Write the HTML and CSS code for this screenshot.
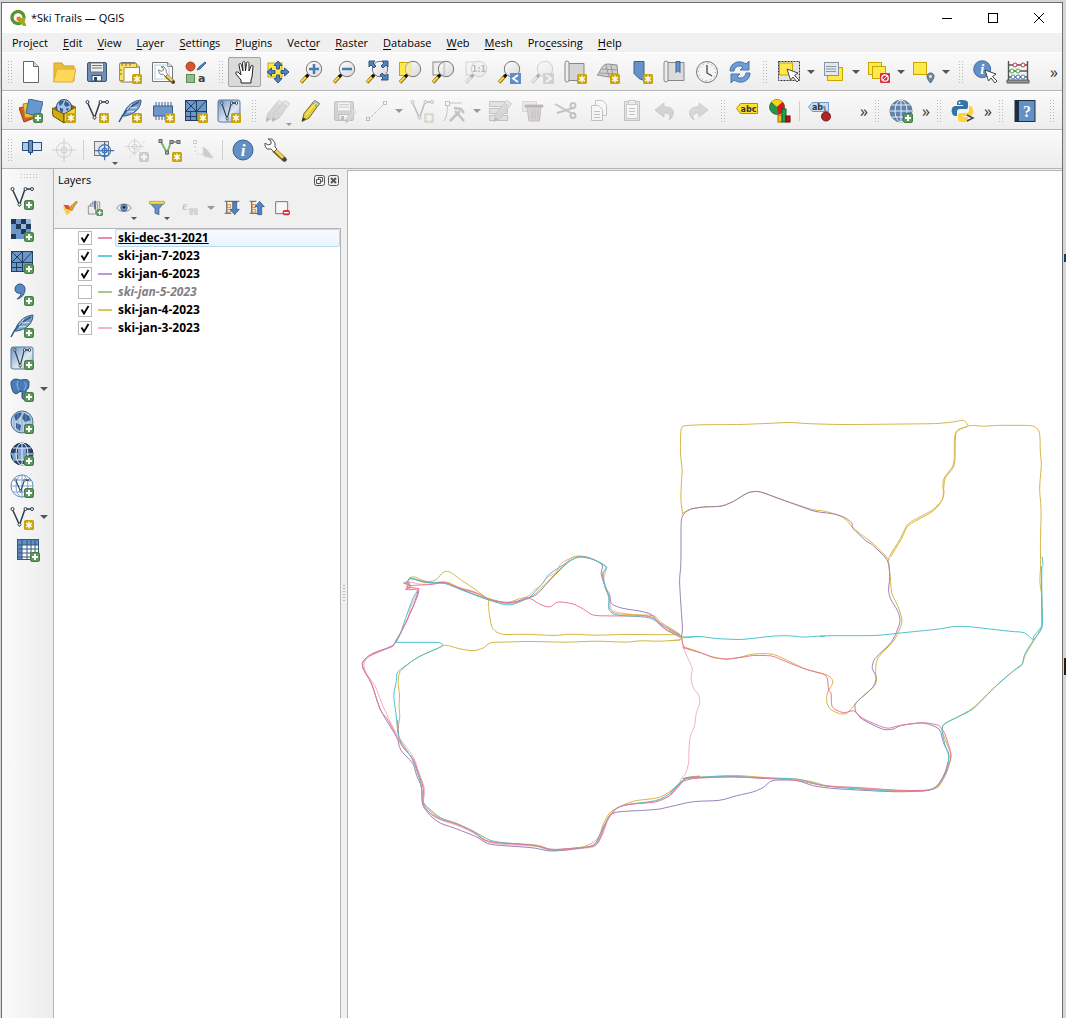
FILE: index.html
```html
<!DOCTYPE html>
<html lang="en">
<head>
<meta charset="utf-8">
<title>*Ski Trails — QGIS</title>
<link rel="stylesheet" href="styles.css">
<script src="tracks.js" defer></script>
</head>
<body>
<svg class="paints" aria-hidden="true">
  <linearGradient id="g-steel" x1="0" y1="0" x2="1" y2="1"><stop offset="0" stop-color="#6f94c0"/><stop offset=".6" stop-color="#dfe8f2"/><stop offset="1" stop-color="#8aa6c8"/></linearGradient>
  <linearGradient id="g-lens" x1="0" y1="0" x2="1" y2="1"><stop offset="0" stop-color="#fff"/><stop offset="1" stop-color="#d4d4d4"/></linearGradient>
</svg>
<svg class="sprite" aria-hidden="true">
  <defs>
    <g id="star"><rect x="14" y="14" width="10" height="10" rx="1.500" fill="#c9a40c"/><path d="M19 15.500v7M16 17.200l6 3.600M22 17.200l-6 3.600" stroke="#fff" stroke-width="1.400"/></g>
    <g id="plus"><rect x="14.500" y="14.500" width="9" height="9" rx="1.500" fill="#5b9a5b" stroke="#457f45"/><path d="M19 16v6M16 19h6" stroke="#fff" stroke-width="2"/></g>
    <g id="lens"><path d="M8.500 15.500L2 22.500" stroke="#8a6d00" stroke-width="3.400"/><path d="M7 17l-5 5" stroke="#fcd24c" stroke-width="2"/><path d="M9.500 14.500l-2.500 2.500" stroke="#111" stroke-width="3"/><circle cx="15" cy="9" r="7.700" fill="url(#g-lens)" fill-opacity=".85" stroke="#777"/></g>
    <g id="vee"><path d="M2.500 3.500L9.500 19 15 3h7" fill="none" stroke="#2b3c4e" stroke-width="1.500"/><g fill="#fff" stroke="#2b3c4e"><circle cx="2.500" cy="3" r="1.500"/><circle cx="9.500" cy="18.500" r="1.500"/><circle cx="15.500" cy="3" r="1.500"/><circle cx="22" cy="3" r="1.500"/></g></g>
    <g id="feather"><path d="M5 17C7 9 13 2 23 1c0 7-5 14-16 16z" fill="#7ba3cf" stroke="#35587f"/><path d="M1 23C5 14 12 7 21 3" stroke="#35587f" stroke-width="1.500" fill="none"/><path d="M9 13l7-.5M12 9l7-.5M9 11l5-6" stroke="#dce8f4" fill="none"/></g>
    <g id="mesh"><rect x="1.500" y="1.500" width="21" height="20" fill="#6d97cb" stroke="#213f63"/><path d="M1.500 12.500h21M12.500 1.500v11M1.500 1.500l11 11M12.500 1.500l-11 11M12.500 12.500l10-11M6.500 12.500v9M12.500 12.500v9M1.500 17.500h11" stroke="#213f63" fill="none"/></g>
    <g id="arrow"><path d="M0 0l3.500 11 2.500-3 4 5 2-2-4.500-4.500L11 4z" fill="#fff" stroke="#444"/></g>
    <g id="grid-lines"><path d="M12 1v22M1 12h22M3 6h18M3 18h18" fill="none"/><ellipse cx="12" cy="12" rx="6" ry="11" fill="none"/></g>
    <g id="target"><circle cx="12" cy="12" r="7.500" fill="none"/><path d="M12 0v24M0 12h24"/><circle cx="12" cy="12" r="3" fill="none"/></g>
    <g id="wrench"><path d="M10 12l11 10" stroke="#7c6314" stroke-width="5"/><path d="M10.500 11.500L20 20.500" stroke="#f1cf63" stroke-width="3"/><path d="M19 20l3 3" stroke="#444" stroke-width="3.500"/><path d="M4 1l4 0 3 4 0 4 2 2-3 3-3-3-4 0-2-3 0-3 3 2 3-1 0-3z" fill="#fff" stroke="#555"/></g>
    <g id="pencil"><path d="M3 22.500l2-8L15.500 1.500l5 3L10 19z" fill="#e2cf3a" stroke="#77671b"/><path d="M15.500 1.500l5 3-2 3-5-3.500z" fill="#c9c9c9" stroke="#888"/><path d="M7 16L16 5" stroke="#fff59a"/><path d="M3 22.500l1-4 3 1.500z" fill="#333"/></g>
    <g id="pencil-red"><path d="M3 22.500l2-8L15.500 1.500l5 3L10 19z" fill="#b98f8f" stroke="#8b5f5f"/><path d="M15.500 1.500l5 3-2 3-5-3.500z" fill="#c9c9c9" stroke="#888"/><path d="M3 22.500l1-4 3 1.500z" fill="#333"/></g>
    <g id="disk"><rect x="2.500" y="2.500" width="19" height="19" rx="1.500" fill="#6b8fbb" stroke="#3d566f"/><path d="M5.500 3h13v9h-13z" fill="#eee" stroke="#777"/><path d="M7 5.500h10M7 8h10" stroke="#777"/><path d="M7 15.500h9.500V21H7z" fill="#f6f6f6" stroke="#344e68"/><path d="M9 17h3v4H9z" fill="#34495e"/></g>
    <g id="info"><circle cx="12" cy="12" r="10" fill="#6290c5" stroke="#365f93"/><text x="12" y="18" text-anchor="middle" class="glyph-i">i</text></g>
    <g id="page"><path d="M3 2.500h14l4.500 4.500v15H3z" fill="#fff" stroke="#777"/><path d="M17 2.500V7h4.500" fill="#ddd" stroke="#777"/></g>
    <g id="globe-land" fill="#39608f"><path d="M4 6c3-4 6-4 8-3l-2 4-4 4zM14 3l5 3 2 4-6 2-3-4zM6 13l5 2-1 6-4-3zM15 14l5 0-3 5z"/></g>
  </defs>
  <symbol id="i-qgis" viewBox="0 0 24 24"><path d="M18 18A9 9 0 1 1 21 12" fill="none" stroke="#589632" stroke-width="5"/><path d="M21 12a9 9 0 0 1-2 5" fill="none" stroke="#93b023" stroke-width="5"/><path d="M12 12h6l6 9v3h-4l-8-8z" fill="#93b023"/><path d="M10 10h6l0 6-6 0z" fill="#ee7913"/></symbol>
  <symbol id="i-new" viewBox="0 0 24 24"><path d="M4.500 1.500h10l5 5v16h-15z" fill="#fff" stroke="#666"/><path d="M14.500 1.500v5h5" fill="#ddd" stroke="#666"/></symbol>
  <symbol id="i-open" viewBox="0 0 24 24"><path d="M2 3h8l2 3h10v15H2z" fill="#ecbc3c" stroke="#d09f22"/><path d="M5 9h19l-3 13H1.500z" fill="#fdd757" stroke="#dcae30"/></symbol>
  <symbol id="i-save" viewBox="0 0 24 24"><use href="#disk"/></symbol>
  <symbol id="i-layout" viewBox="0 0 24 24"><use href="#page"/><path d="M1.500 3.500h17v4H6v13H1.500z" fill="#f9df72" stroke="#b3911c"/><path d="M4 4v2M8 4v2M12 4v2M2 10h2M2 14h2" stroke="#8a6d00"/><use href="#star"/></symbol>
  <symbol id="i-layouts" viewBox="0 0 24 24"><path d="M1.500 2.500h15l5 4v15h-20z" fill="#fff" stroke="#777"/><path d="M16.500 2.500v4h5" fill="#ddd" stroke="#777"/><rect x="4" y="5" width="14" height="14" fill="none" stroke="#b5cbea"/><g transform="translate(7 6) scale(.75)"><use href="#wrench"/></g></symbol>
  <symbol id="i-style" viewBox="0 0 24 24"><circle cx="6.500" cy="6.500" r="4.500" fill="#d2562e" stroke="#a83f1d"/><path d="M13 10l3-1 6-6-1-1-6 5z" fill="#5b8cc6" stroke="#345f95"/><rect x="2.500" y="14.500" width="8" height="8" fill="#93bd8d" stroke="#5c8a56"/><text x="14" y="22" class="glyph-a">a</text></symbol>
  <symbol id="i-pan" viewBox="0 0 24 24"><path d="M8 23v-3L3 14c-1-2 1-3 3-1l2 2L6 5c0-2 2-2 2.500 0L10 11 9.500 3c0-2 2.500-2 2.500 0l.5 8 1-7.500c0-2 2.500-2 2.500 0L16 11l2-5c1-1.500 2.500-.5 2 1l-1 10-1 3v3z" fill="#fff" stroke="#222"/></symbol>
  <symbol id="i-pansel" viewBox="0 0 24 24"><rect x="2" y="3" width="14" height="14" fill="#ffe84c" stroke="#c7a600"/><path d="M12 1l4 4.500h-2.500V9h-3V5.500H8zM12 23l-4-4.500h2.500V15h3v3.500H16zM1 12l4.500-4v2.500H9v3H5.500V16zM23 12l-4.500 4v-2.500H15v-3h3.500V8z" fill="#4f83c1" stroke="#2d5486"/></symbol>
  <symbol id="i-zin" viewBox="0 0 24 24"><use href="#lens"/><path d="M15 4v10M10 9h10" stroke="#4a7ab4" stroke-width="2.500"/></symbol>
  <symbol id="i-zout" viewBox="0 0 24 24"><use href="#lens"/><path d="M10 9h10" stroke="#4a7ab4" stroke-width="2.500"/></symbol>
  <symbol id="i-zfull" viewBox="0 0 24 24"><use href="#lens"/><path d="M4 1h6L8 3l3 3-2 2-3-3-2 2zM23 1v6l-2-2-3 3-2-2 3-3-2-2zM23 20h-7l2-2-3-3 2-2 3 3 3-2z" fill="#4f83c1" stroke="#2d5486"/></symbol>
  <symbol id="i-zsel" viewBox="0 0 24 24"><rect x="1.500" y="2.500" width="12" height="13" fill="#ffe84c" stroke="#c7a600"/><use href="#lens"/><path d="M14 2v14a7 7 0 0 1 0-14z" fill="#efe79a" opacity=".7"/></symbol>
  <symbol id="i-zlay" viewBox="0 0 24 24"><rect x="2" y="2" width="12" height="13" fill="#eee" stroke="#888"/><use href="#lens"/><path d="M13 2v13" stroke="#bbb"/></symbol>
  <symbol id="i-znat" viewBox="0 0 24 24"><rect x="2" y="2" width="12" height="13" fill="#eee" stroke="#888"/><use href="#lens"/><text x="15" y="12" text-anchor="middle" class="glyph-abc">1:1</text></symbol>
  <symbol id="i-zlast" viewBox="0 0 24 24"><use href="#lens"/><rect x="13" y="13" width="11" height="11" fill="#5f8fc7"/><path d="M21 15l-5 3.500 5 3.500" fill="none" stroke="#fff" stroke-width="1.800"/></symbol>
  <symbol id="i-znext" viewBox="0 0 24 24"><use href="#lens"/><rect x="13" y="13" width="11" height="11" fill="#888"/><path d="M16 15l5 3.500-5 3.500" fill="none" stroke="#fff" stroke-width="1.800"/></symbol>
  <symbol id="i-map" viewBox="0 0 24 24"><path d="M5 3.500h16v17H5z" fill="#d5d5d5" stroke="#888"/><path d="M2 3q0-2 2-2t2 2v17q0 2-2 2t-2-2z" fill="#eee" stroke="#888"/><use href="#star"/></symbol>
  <symbol id="i-map3" viewBox="0 0 24 24"><path d="M1 15C5 12 5 4 12 4l9 1 1 11-9 1z" fill="#cfcfcf" stroke="#8d8d8d"/><path d="M6 9l15 1M10 5l3 12M15 5l2 11M3 13l19 1" stroke="#9a9a9a" fill="none"/><use href="#star"/></symbol>
  <symbol id="i-bm" viewBox="0 0 24 24"><path d="M5 1.500h10v19l-5-2-5-5z" fill="#6592c8" stroke="#3a628f"/><use href="#star"/></symbol>
  <symbol id="i-bms" viewBox="0 0 24 24"><path d="M5 2.500h17v18H5z" fill="#dcdcdc" stroke="#888"/><path d="M2 3q0-2 2-2t2 2v17q0 2-2 2t-2-2z" fill="#eee" stroke="#888"/><path d="M14 1.500h4v11l-2-2-2 2z" fill="#6592c8" stroke="#3a628f"/></symbol>
  <symbol id="i-clock" viewBox="0 0 24 24"><circle cx="12" cy="12" r="10.500" fill="#f4f4f4" stroke="#777"/><circle cx="12" cy="12" r="8.500" fill="none" stroke="#6c93c4" stroke-dasharray="1 3.450"/><path d="M12 5v8l5 3" fill="none" stroke="#444" stroke-width="1.300"/></symbol>
  <symbol id="i-reload" viewBox="0 0 24 24"><path d="M2 11C2 3 11-1 18 4l3-3v9h-9l3-3C11 5 7 6 6 11z" fill="#6f9dd2" stroke="#4875aa"/><path d="M22 13c0 8-9 12-16 7l-3 3v-9h9l-3 3c4 2 8 1 9-4z" fill="#6f9dd2" stroke="#4875aa"/></symbol>
  <symbol id="i-sel" viewBox="0 0 24 24"><rect x="1.500" y="1.500" width="21" height="19" fill="#e4e4e4" stroke="#333" stroke-dasharray="2 1"/><rect x="2.500" y="3" width="13" height="12" fill="#ffe84c" stroke="#c7a600"/><g transform="translate(10 9)"><use href="#arrow"/></g></symbol>
  <symbol id="i-selval" viewBox="0 0 24 24"><rect x="5.500" y="7.500" width="15" height="13" fill="#ffe84c" stroke="#c7a600"/><rect x="2.500" y="2.500" width="14" height="13" fill="#e5e7ea" stroke="#8496a6"/><path d="M4 6.500h10M4 9h10M4 11.500h10" stroke="#8496a6"/></symbol>
  <symbol id="i-desel" viewBox="0 0 24 24"><rect x="1.500" y="2.500" width="13" height="12" fill="#ffe84c" stroke="#c7a600"/><rect x="5.500" y="6.500" width="13" height="12" fill="#ffe84c" stroke="#c7a600"/><rect x="13" y="13" width="10" height="10" rx="1" fill="#dc2f3c"/><circle cx="18" cy="18" r="3.200" fill="none" stroke="#fff" stroke-width="1.300"/><path d="M16 20l4-4" stroke="#fff"/></symbol>
  <symbol id="i-selloc" viewBox="0 0 24 24"><rect x="1.500" y="2.500" width="13" height="12" fill="#ffe84c" stroke="#c7a600"/><path d="M18.500 23c-6-7-3-10 0-10s6 3 0 10z" fill="#6f899f" stroke="#4e687d"/><circle cx="18.500" cy="16.500" r="1.300" fill="#fff"/></symbol>
  <symbol id="i-ident" viewBox="0 0 24 24"><g transform="translate(-1 -1) scale(.85)"><use href="#info"/></g><g transform="translate(12 10)"><use href="#arrow"/></g></symbol>
  <symbol id="i-abacus" viewBox="0 0 24 24"><path d="M2.500 1v21M21.500 1v21M2 5h20M2 11h20M2 17h20" stroke="#555" fill="none" stroke-width="1.400"/><path d="M1 20h22v3H1z" fill="#999" stroke="#555"/><g fill="#fff"><g stroke="#c33"><circle cx="9" cy="5" r="2"/><circle cx="17" cy="5" r="2"/></g><g stroke="#4a4"><circle cx="6" cy="11" r="2"/><circle cx="12" cy="11" r="2"/></g><g stroke="#4878b0"><circle cx="7" cy="17" r="2"/><circle cx="12" cy="17" r="2"/><circle cx="17" cy="17" r="2"/></g></g></symbol>
  <symbol id="i-dsm" viewBox="0 0 24 24"><path d="M0 9l12-3 6 12-13 5z" fill="#d5592c" stroke="#98401d"/><path d="M4 5l13-2 2 14-13 2z" fill="#f0c62c" stroke="#af8b12"/><path d="M10 0l14 3-4 15-13-4z" fill="#6797cf" stroke="#3c6698"/><use href="#plus"/></symbol>
  <symbol id="i-gpkg" viewBox="0 0 24 24"><path d="M1 9l12-7 11 6-12 7z" fill="#806c10"/><circle cx="12" cy="8" r="7.500" fill="#a9c4e5" stroke="#2e4e75"/><g transform="translate(4 0) scale(.66)"><use href="#globe-land"/></g><path d="M0 9l12 6v9L1 17z" fill="#d2ac12" stroke="#66500a"/><path d="M12 15l12-7v9l-12 7z" fill="#f6d926" stroke="#66500a"/><use href="#star"/></symbol>
  <symbol id="i-shp" viewBox="0 0 24 24"><use href="#vee"/><use href="#star"/></symbol>
  <symbol id="i-spl" viewBox="0 0 24 24"><use href="#feather"/><use href="#star"/></symbol>
  <symbol id="i-mem" viewBox="0 0 24 24"><path d="M5 3v18M8 3v18M11 3v18M14 3v18M17 3v18M20 3v18" stroke="#38618f"/><rect x="2.500" y="7" width="19" height="10" fill="#6d97cb" stroke="#38618f"/><use href="#star"/></symbol>
  <symbol id="i-meshnew" viewBox="0 0 24 24"><use href="#mesh"/><use href="#star"/></symbol>
  <symbol id="i-gps" viewBox="0 0 24 24"><rect x="1" y="1" width="22" height="22" rx="2" fill="url(#g-steel)" stroke="#56789f"/><g transform="translate(3 1) scale(.75 1)"><use href="#vee"/></g><use href="#star"/></symbol>
  <symbol id="i-edits" viewBox="0 0 24 24"><g transform="translate(-3 0)"><use href="#pencil-red"/></g><g transform="translate(3 0)"><use href="#pencil-red"/></g></symbol>
  <symbol id="i-edit" viewBox="0 0 24 24"><use href="#pencil"/></symbol>
  <symbol id="i-saveed" viewBox="0 0 24 24"><use href="#disk"/><g transform="translate(12 10) scale(.6)"><use href="#pencil-red"/></g></symbol>
  <symbol id="i-line" viewBox="0 0 24 24"><path d="M3 21L20 4" stroke="#444" stroke-dasharray="3 1.500"/><g fill="#fff" stroke="#444"><rect x="1.500" y="18.500" width="3" height="3"/><rect x="18.500" y="2.500" width="3" height="3"/></g></symbol>
  <symbol id="i-vertex" viewBox="0 0 24 24"><path d="M5 4h14M4 5c1 6 0 12-3 17" fill="none" stroke="#555"/><rect x="2.500" y="2.500" width="4" height="4" fill="#fff" stroke="#444"/><path d="M7 22l10-10M21 22l-9-10M11 9l7 1 3 4" stroke="#555" stroke-width="2.500" fill="none"/></symbol>
  <symbol id="i-modattr" viewBox="0 0 24 24"><path d="M1.500 2.500h18v5h-18zM1.500 9.500h18v5h-18zM1.500 16.500h18v5h-18z" fill="#c9c06a" stroke="#555"/><g transform="translate(3 0)"><use href="#pencil-red"/></g></symbol>
  <symbol id="i-trash" viewBox="0 0 24 24"><path d="M1.500 2.500h14v10h-14z" fill="#d5cc9a" stroke="#999"/><path d="M6 8h14l-1.500 14H8z" fill="#c58080" stroke="#8d3a3a"/><path d="M4 6h18v2H4zM11 10v10M14 10v10M17 10v10" stroke="#8d3a3a"/></symbol>
  <symbol id="i-cut" viewBox="0 0 24 24"><path d="M1 5l16 9M3 14l16-5" stroke="#555" stroke-width="2"/><circle cx="19" cy="6.500" r="2.500" fill="none" stroke="#844" stroke-width="2"/><circle cx="19" cy="16.500" r="2.500" fill="none" stroke="#844" stroke-width="2"/></symbol>
  <symbol id="i-copy" viewBox="0 0 24 24"><path d="M8.500 1.500h7l4 4v11h-11z" fill="#fff" stroke="#555"/><path d="M4.500 6.500h7l4 4v11h-11z" fill="#fff" stroke="#555"/><path d="M7 12.500h6M7 15.500h6M7 18.500h6" stroke="#555"/></symbol>
  <symbol id="i-paste" viewBox="0 0 24 24"><path d="M4.500 2.500h15v19h-15z" fill="#bbb" stroke="#555"/><path d="M6.500 5.500h11v14h-11z" fill="#fff" stroke="#777"/><path d="M8.500 1.500h7v4h-7z" fill="#ddd" stroke="#555"/><path d="M9 9.500h6M9 12.500h6M9 15.500h6" stroke="#555"/></symbol>
  <symbol id="i-undo" viewBox="0 0 24 24"><path d="M2 11l9-7v4c11-1 12 8 5 13 3-6-1-7-5-7v4z" fill="#b08070" stroke="#865"/></symbol>
  <symbol id="i-redo" viewBox="0 0 24 24"><path d="M22 11l-9-7v4C2 7 1 16 8 21c-3-6 1-7 5-7v4z" fill="#8b9f90" stroke="#576"/></symbol>
  <symbol id="i-abc" viewBox="0 0 24 24"><path d="M1.500 9.500l4-5h17v10h-17z" fill="#ffe22c" stroke="#ab8f10"/><text x="13.500" y="12.500" text-anchor="middle" class="glyph-abc">abc</text></symbol>
  <symbol id="i-diag" viewBox="0 0 24 24"><circle cx="9" cy="8" r="7.500" fill="#1d9c48" stroke="#333" stroke-width=".6"/><path d="M9 8L3.500 3a7.500 7.500 0 0 1 11 0z" fill="#fcd016"/><path d="M9 8l5.500-5a7.500 7.500 0 0 1-4 12.500z" fill="#d01c1c"/><rect x="10" y="16" width="4" height="7" fill="#fcb813" stroke="#a36d00"/><rect x="14" y="10" width="4" height="13" fill="#1da44c" stroke="#0d6529"/><rect x="18" y="17" width="4" height="6" fill="#c41414" stroke="#700"/></symbol>
  <symbol id="i-abpin" viewBox="0 0 24 24"><path d="M.5 8l4-4.500h16v9h-16z" fill="#c7dcf4" stroke="#6c98cd"/><text x="9.500" y="11" text-anchor="middle" class="glyph-abc">ab</text><path d="M16 7l2 8" stroke="#888" stroke-width="2"/><circle cx="18" cy="17.500" r="4.500" fill="#ac2727" stroke="#821616"/></symbol>
  <symbol id="i-web" viewBox="0 0 24 24"><circle cx="12" cy="12" r="11" fill="#5f82b0" stroke="#6c7f93"/><g stroke="#e8edf4"><use href="#grid-lines"/></g><use href="#plus"/></symbol>
  <symbol id="i-py" viewBox="0 0 24 24"><path d="M11 1c-5 0-5 1-5 5h6v1H4c-5 0-4 10 0 10h2v-4c0-2 1-3 3-3h6c2 0 2-1 2-3V4c0-2-2-3-6-3z" fill="#3673a5"/><circle cx="8.500" cy="3.800" r="1" fill="#fff"/><path d="M12 23c5 0 5-1 5-5h-5v-1h7c5 0 4-10 0-10h-1v4c0 2-1 3-3 3H9c-2 0-2 1-2 3v3c0 2 1 3 5 3z" fill="#fdd33e"/><path d="M16 16l6 3-6 3" fill="none" stroke="#444" stroke-width="1.400"/></symbol>
  <symbol id="i-help" viewBox="0 0 24 24"><rect x="2" y="1.500" width="20" height="21" fill="#6391c7" stroke="#1d2e44"/><rect x="2" y="1.500" width="4" height="21" fill="#1d2e44"/><text x="14" y="18" text-anchor="middle" class="glyph-q">?</text></symbol>
  <symbol id="i-snap" viewBox="0 0 24 24"><rect x="3.500" y="4.500" width="19" height="8" fill="#d6e7f9" stroke="#2b4f7a"/><rect x="4" y="5" width="6" height="7" fill="#a9caee"/><path d="M9.500 2.500h4v12h-4zM11.500 14v3" fill="#6290c5" stroke="#23436b"/></symbol>
  <symbol id="i-adv" viewBox="0 0 24 24"><g stroke="#777"><use href="#target"/></g></symbol>
  <symbol id="i-tgt" viewBox="0 0 24 24"><rect x="2.500" y="3.500" width="14" height="14" fill="#e6e6e6" stroke="#777"/><g stroke="#3f74b4" stroke-width="1.500" transform="translate(3 3) scale(.8)"><use href="#target"/></g></symbol>
  <symbol id="i-advplus" viewBox="0 0 24 24"><g stroke="#777" transform="translate(0 -1) scale(.8)"><use href="#target"/></g><path d="M4 20L20 3" stroke="#777" stroke-dasharray="3 2"/><use href="#plus"/></symbol>
  <symbol id="i-greenv" viewBox="0 0 24 24"><path d="M2.500 3L9 15l4-11h7" fill="none" stroke="#7bb67b" stroke-width="2"/><g fill="#aaa" stroke="#666"><rect x="1" y="1.500" width="3" height="3"/><rect x="7.500" y="13" width="3" height="3"/><rect x="12" y="2.500" width="3" height="3"/><rect x="19" y="2.500" width="3" height="3"/></g><use href="#star"/></symbol>
  <symbol id="i-brush" viewBox="0 0 24 24"><path d="M4 4v8q2 6 9 4" fill="none" stroke="#777" stroke-dasharray="2 2"/><rect x="2.500" y="2.500" width="3" height="3" fill="#fff" stroke="#777"/><path d="M12 9l4 3 6 8-9-2z" fill="#8a7a5a" stroke="#8a7a5a"/></symbol>
  <symbol id="i-info" viewBox="0 0 24 24"><use href="#info"/></symbol>
  <symbol id="i-wrench" viewBox="0 0 24 24"><use href="#wrench"/></symbol>
  <symbol id="i-addv" viewBox="0 0 24 24"><use href="#vee"/><use href="#plus"/></symbol>
  <symbol id="i-addr" viewBox="0 0 24 24"><path d="M1 1h20v20H1z" fill="#6d97cb"/><path d="M1 1h5v5H1zM11 1h5v5h-5zM6 6h5v5H6zM16 6h5v5h-5zM1 16h5v5H1zM11 11h5v5h-5z" fill="#213a58"/><path d="M16 1h5v5h-5zM11 6h5v5h-5z" fill="#99b8de"/><use href="#plus"/></symbol>
  <symbol id="i-addm" viewBox="0 0 24 24"><use href="#mesh"/><use href="#plus"/></symbol>
  <symbol id="i-comma" viewBox="0 0 24 24"><path d="M5 7a5 5 0 1 1 10 0c0 5-3 9-8 10 3-2 4-4 4-6-4 1-6-1-6-4z" fill="#5a8ac3" stroke="#2e5484"/><use href="#plus"/></symbol>
  <symbol id="i-adds" viewBox="0 0 24 24"><use href="#feather"/><use href="#plus"/></symbol>
  <symbol id="i-addvt" viewBox="0 0 24 24"><rect x="1" y="1" width="22" height="22" rx="2" fill="url(#g-steel)" stroke="#56789f"/><g transform="translate(3 1) scale(.75 1)"><use href="#vee"/></g><use href="#plus"/></symbol>
  <symbol id="i-pg" viewBox="0 0 24 24"><path d="M3 2c3-2 6 0 8 0s7-2 8 2c0 4 0 7-3 8v7c-1 3-4 3-4 0v-6l-3 1c-2 3-6 2-7-3-1-4-2-8 1-9z" fill="#4a7db8" stroke="#284d7a"/><path d="M8 3c-2 4 0 7 1 9M14 4c3 2 2 5 0 8" fill="none" stroke="#9dbbdc"/><use href="#plus"/></symbol>
  <symbol id="i-wms" viewBox="0 0 24 24"><circle cx="12" cy="12" r="11" fill="#b9d0ea" stroke="#4b6e98"/><use href="#globe-land"/><path d="M4 4v16M8 2v20M12 1v22M16 2v20M20 4v16" stroke="#7d9fc8" stroke-width=".7"/><use href="#plus"/></symbol>
  <symbol id="i-wcs" viewBox="0 0 24 24"><circle cx="12" cy="12" r="11" fill="#27486f" stroke="#1b3350"/><path d="M8 6h8v5H8zM2 13h5v4H3zM8 13h8v5H8z" fill="#7fa8d8"/><g stroke="#e8f0f9"><use href="#grid-lines"/></g><use href="#plus"/></symbol>
  <symbol id="i-wfs" viewBox="0 0 24 24"><circle cx="12" cy="12" r="11" fill="#fff" stroke="#5c8cc4"/><g stroke="#7ba4d6"><use href="#grid-lines"/></g><g transform="translate(4 4) scale(.7)"><use href="#vee"/></g><use href="#plus"/></symbol>
  <symbol id="i-table" viewBox="0 0 24 24"><rect x="1.500" y="1.500" width="21" height="20" fill="#fff" stroke="#35587f"/><path d="M2 2h20v5H2zM2 7h4v14H2z" fill="#5f8dc4"/><path d="M2 7h20M2 11h20M2 15h20M2 19h20M6 2v19M11 2v19M15 2v19M19 2v19" stroke="#35587f"/><use href="#plus"/></symbol>
  <symbol id="i-styling" viewBox="0 0 24 24"><path d="M1 10l13 4-2 5-5 4z" fill="#f5cf42"/><path d="M2 7l8 1 4 7-8-2z" fill="#e2473c"/><path d="M10 12l5-4 6-6 2 1-5 7-3 6z" fill="#e5a23c" stroke="#a9681c"/></symbol>
  <symbol id="i-group" viewBox="0 0 24 24"><g fill="#eee" stroke="#666"><path d="M8 3h11v13H8z"/><path d="M5 6h11v13H5z"/><path d="M2 9h11v12H2z"/></g><path d="M12 1v13" stroke="#35587f" stroke-width="2"/><use href="#plus"/></symbol>
  <symbol id="i-eye" viewBox="0 0 24 24"><path d="M1 12C6 4 18 4 23 12 18 19 6 19 1 12z" fill="#f4f4f4" stroke="#8c8c8c" stroke-width="1.500"/><circle cx="12" cy="11.500" r="5" fill="#6592c8" stroke="#34587f"/><circle cx="12" cy="11" r="2" fill="#222"/></symbol>
  <symbol id="i-filter" viewBox="0 0 24 24"><path d="M1 4h22l-8 9v9l-6-2v-7z" fill="#6592c8" stroke="#34587f"/><path d="M1 2h22v4H1z" fill="#f6e14c" stroke="#a48e1e"/></symbol>
  <symbol id="i-eps" viewBox="0 0 24 24"><text x="0" y="15" class="glyph-eps">ε</text><path d="M11 13h12v9h-4v-5h-3v5h-4z" fill="#999" stroke="#777"/></symbol>
  <symbol id="i-expand" viewBox="0 0 24 24"><path d="M1 2h22M1 20h10M4 2v18" stroke="#777" stroke-width="2"/><path d="M5 7h5v4H5zM5 14h5v4H5z" fill="#fff" stroke="#e38414" stroke-width="1.500"/><path d="M13 3h6v11h4l-7 8-7-8h4z" fill="#4f83c1" stroke="#2a4f7e"/></symbol>
  <symbol id="i-collapse" viewBox="0 0 24 24"><path d="M1 2h10M1 20h14M4 2v18" stroke="#777" stroke-width="2"/><path d="M5 7h5v4H5zM5 14h5v4H5z" fill="#fff" stroke="#e38414" stroke-width="1.500"/><path d="M13 22h6V10h4l-7-8-7 8h4z" fill="#4f83c1" stroke="#2a4f7e"/></symbol>
  <symbol id="i-remove" viewBox="0 0 24 24"><path d="M2.500 2.500h18v18h-18z" fill="#f7f7f7" stroke="#777" stroke-width="1.500"/><rect x="13" y="15" width="11" height="8" rx="3" fill="#dc2f3c"/><path d="M15 19h7" stroke="#fff" stroke-width="2"/></symbol>
</svg>

<div class="window">
  <header class="titlebar">
    <svg class="logo" aria-hidden="true"><use href="#i-qgis"/></svg>
    <h1>*Ski Trails — QGIS</h1>
    <button class="win" aria-label="Minimize"><svg viewBox="0 0 12 12"><path d="M1 6.500h10"/></svg></button>
    <button class="win" aria-label="Maximize"><svg viewBox="0 0 12 12"><path d="M1.500 1.500h9v9h-9z"/></svg></button>
    <button class="win" aria-label="Close"><svg class="smooth" viewBox="0 0 12 12"><path d="M1 1l10 10M11 1L1 11"/></svg></button>
  </header>
  <nav class="menubar">
    <button>Pro<u>j</u>ect</button><button><u>E</u>dit</button><button><u>V</u>iew</button><button><u>L</u>ayer</button><button><u>S</u>ettings</button><button><u>P</u>lugins</button><button>Vect<u>o</u>r</button><button><u>R</u>aster</button><button><u>D</u>atabase</button><button><u>W</u>eb</button><button><u>M</u>esh</button><button>Pro<u>c</u>essing</button><button><u>H</u>elp</button>
  </nav>

  <div class="toolbar">
    <i class="grip first"></i>
    <button class="tool" aria-label="New Project"><svg><use href="#i-new"/></svg></button>
    <button class="tool" aria-label="Open Project"><svg><use href="#i-open"/></svg></button>
    <button class="tool" aria-label="Save Project"><svg><use href="#i-save"/></svg></button>
    <button class="tool" aria-label="New Print Layout"><svg><use href="#i-layout"/></svg></button>
    <button class="tool" aria-label="Layout Manager"><svg><use href="#i-layouts"/></svg></button>
    <button class="tool" aria-label="Style Manager"><svg><use href="#i-style"/></svg></button>
    <i class="grip"></i>
    <button class="tool pressed" aria-label="Pan Map" aria-pressed="true"><svg><use href="#i-pan"/></svg></button>
    <button class="tool" aria-label="Pan to Selection"><svg><use href="#i-pansel"/></svg></button>
    <button class="tool" aria-label="Zoom In"><svg><use href="#i-zin"/></svg></button>
    <button class="tool" aria-label="Zoom Out"><svg><use href="#i-zout"/></svg></button>
    <button class="tool" aria-label="Zoom Full"><svg><use href="#i-zfull"/></svg></button>
    <button class="tool" aria-label="Zoom to Selection"><svg><use href="#i-zsel"/></svg></button>
    <button class="tool" aria-label="Zoom to Layer"><svg><use href="#i-zlay"/></svg></button>
    <button class="tool" aria-label="Zoom to Native Resolution" disabled><svg><use href="#i-znat"/></svg></button>
    <button class="tool" aria-label="Zoom Last"><svg><use href="#i-zlast"/></svg></button>
    <button class="tool" aria-label="Zoom Next" disabled><svg><use href="#i-znext"/></svg></button>
    <button class="tool" aria-label="New Map View"><svg><use href="#i-map"/></svg></button>
    <button class="tool" aria-label="New 3D Map View"><svg><use href="#i-map3"/></svg></button>
    <button class="tool" aria-label="New Bookmark"><svg><use href="#i-bm"/></svg></button>
    <button class="tool" aria-label="Show Bookmarks"><svg><use href="#i-bms"/></svg></button>
    <button class="tool" aria-label="Temporal Controller"><svg><use href="#i-clock"/></svg></button>
    <button class="tool" aria-label="Refresh"><svg><use href="#i-reload"/></svg></button>
    <i class="grip"></i>
    <button class="tool drop" aria-label="Select Features"><svg><use href="#i-sel"/></svg></button>
    <button class="tool drop" aria-label="Select by Value"><svg><use href="#i-selval"/></svg></button>
    <button class="tool drop" aria-label="Deselect Features"><svg><use href="#i-desel"/></svg></button>
    <button class="tool drop" aria-label="Select by Location"><svg><use href="#i-selloc"/></svg></button>
    <i class="grip"></i>
    <button class="tool" aria-label="Identify Features"><svg><use href="#i-ident"/></svg></button>
    <button class="tool" aria-label="Field Calculator"><svg><use href="#i-abacus"/></svg></button>
    <button class="more end">»</button>
  </div>

  <div class="toolbar">
    <i class="grip first"></i>
    <button class="tool" aria-label="Data Source Manager"><svg><use href="#i-dsm"/></svg></button>
    <button class="tool" aria-label="New GeoPackage Layer"><svg><use href="#i-gpkg"/></svg></button>
    <button class="tool" aria-label="New Shapefile Layer"><svg><use href="#i-shp"/></svg></button>
    <button class="tool" aria-label="New SpatiaLite Layer"><svg><use href="#i-spl"/></svg></button>
    <button class="tool" aria-label="New Scratch Layer"><svg><use href="#i-mem"/></svg></button>
    <button class="tool" aria-label="New Mesh Layer"><svg><use href="#i-meshnew"/></svg></button>
    <button class="tool" aria-label="New GPX Layer"><svg><use href="#i-gps"/></svg></button>
    <i class="grip"></i>
    <button class="tool menu" aria-label="Current Edits" disabled><svg><use href="#i-edits"/></svg></button>
    <button class="tool" aria-label="Toggle Editing"><svg><use href="#i-edit"/></svg></button>
    <button class="tool" aria-label="Save Edits" disabled><svg><use href="#i-saveed"/></svg></button>
    <button class="tool drop" aria-label="Add Line Feature" disabled><svg><use href="#i-line"/></svg></button>
    <button class="tool" aria-label="Add Feature" disabled><svg><use href="#i-shp"/></svg></button>
    <button class="tool drop" aria-label="Vertex Tool" disabled><svg><use href="#i-vertex"/></svg></button>
    <button class="tool" aria-label="Modify Attributes" disabled><svg><use href="#i-modattr"/></svg></button>
    <button class="tool" aria-label="Delete Selected" disabled><svg><use href="#i-trash"/></svg></button>
    <button class="tool" aria-label="Cut Features" disabled><svg><use href="#i-cut"/></svg></button>
    <button class="tool" aria-label="Copy Features" disabled><svg><use href="#i-copy"/></svg></button>
    <button class="tool" aria-label="Paste Features" disabled><svg><use href="#i-paste"/></svg></button>
    <button class="tool" aria-label="Undo" disabled><svg><use href="#i-undo"/></svg></button>
    <button class="tool" aria-label="Redo" disabled><svg><use href="#i-redo"/></svg></button>
    <i class="grip"></i>
    <button class="tool" aria-label="Layer Labeling"><svg><use href="#i-abc"/></svg></button>
    <button class="tool" aria-label="Layer Diagrams"><svg><use href="#i-diag"/></svg></button>
    <i class="sep"></i>
    <button class="tool" aria-label="Pinned Labels"><svg><use href="#i-abpin"/></svg></button>
    <button class="more end">»</button>
    <i class="grip"></i>
    <button class="tool" aria-label="MetaSearch"><svg><use href="#i-web"/></svg></button>
    <button class="more">»</button>
    <i class="grip"></i>
    <button class="tool" aria-label="Python Console"><svg><use href="#i-py"/></svg></button>
    <button class="more">»</button>
    <i class="grip"></i>
    <button class="tool" aria-label="Help Contents"><svg><use href="#i-help"/></svg></button>
    <i class="grip last"></i>
  </div>

  <div class="toolbar">
    <i class="grip first"></i>
    <button class="tool" aria-label="Snapping"><svg><use href="#i-snap"/></svg></button>
    <button class="tool" aria-label="Advanced Digitizing" disabled><svg><use href="#i-adv"/></svg></button>
    <i class="sep"></i>
    <button class="tool menu" aria-label="Snapping Target"><svg><use href="#i-tgt"/></svg></button>
    <button class="tool" aria-label="Add Snapping Point" disabled><svg><use href="#i-advplus"/></svg></button>
    <button class="tool" aria-label="Topological Editing"><svg><use href="#i-greenv"/></svg></button>
    <button class="tool" aria-label="Clear Tracing" disabled><svg><use href="#i-brush"/></svg></button>
    <i class="sep"></i>
    <button class="tool" aria-label="Information"><svg><use href="#i-info"/></svg></button>
    <button class="tool" aria-label="Settings"><svg><use href="#i-wrench"/></svg></button>
  </div>

  <main class="work">
    <div class="sidebar">
      <i class="grip-h"></i>
      <button class="tool" aria-label="Add Vector Layer"><svg><use href="#i-addv"/></svg></button>
      <button class="tool" aria-label="Add Raster Layer"><svg><use href="#i-addr"/></svg></button>
      <button class="tool" aria-label="Add Mesh Layer"><svg><use href="#i-addm"/></svg></button>
      <button class="tool" aria-label="Add Delimited Text Layer"><svg><use href="#i-comma"/></svg></button>
      <button class="tool" aria-label="Add SpatiaLite Layer"><svg><use href="#i-adds"/></svg></button>
      <button class="tool" aria-label="Add Virtual Layer"><svg><use href="#i-addvt"/></svg></button>
      <button class="tool drop" aria-label="Add PostGIS Layer"><svg><use href="#i-pg"/></svg></button>
      <button class="tool" aria-label="Add WMS Layer"><svg><use href="#i-wms"/></svg></button>
      <button class="tool" aria-label="Add WCS Layer"><svg><use href="#i-wcs"/></svg></button>
      <button class="tool" aria-label="Add WFS Layer"><svg><use href="#i-wfs"/></svg></button>
      <button class="tool drop" aria-label="New Layer"><svg><use href="#i-shp"/></svg></button>
      <button class="tool wide" aria-label="Add Table"><svg><use href="#i-table"/></svg></button>
    </div>

    <section class="layers">
      <div class="panel-head">
        <h2>Layers</h2>
        <button class="dock" aria-label="Float panel"><svg viewBox="0 0 11 11"><rect x=".5" y=".5" width="10" height="10" rx="2"/><path d="M4.500 4V2.500h4v4H7M2.500 4.500h4v4h-4z"/></svg></button>
        <button class="dock" aria-label="Close panel"><svg viewBox="0 0 11 11"><rect x=".5" y=".5" width="10" height="10" rx="2"/><path d="M3 3l5 5M8 3L3 8" stroke-width="2"/></svg></button>
      </div>
      <div class="panel-tools">
        <button class="mini" aria-label="Layer Styling"><svg><use href="#i-styling"/></svg></button>
        <button class="mini" aria-label="Add Group"><svg><use href="#i-group"/></svg></button>
        <button class="mini menu" aria-label="Map Themes"><svg><use href="#i-eye"/></svg></button>
        <button class="mini menu" aria-label="Filter Legend"><svg><use href="#i-filter"/></svg></button>
        <button class="mini drop" aria-label="Filter by Expression" disabled><svg><use href="#i-eps"/></svg></button>
        <button class="mini" aria-label="Expand All"><svg><use href="#i-expand"/></svg></button>
        <button class="mini" aria-label="Collapse All"><svg><use href="#i-collapse"/></svg></button>
        <button class="mini" aria-label="Remove Layer"><svg><use href="#i-remove"/></svg></button>
      </div>
      <ul class="tree">
        <li class="current"><input type="checkbox" id="l1" checked><i class="swatch rose"></i><label for="l1">ski-dec-31-2021</label></li>
        <li><input type="checkbox" id="l2" checked><i class="swatch cyan"></i><label for="l2">ski-jan-7-2023</label></li>
        <li><input type="checkbox" id="l3" checked><i class="swatch violet"></i><label for="l3">ski-jan-6-2023</label></li>
        <li class="off"><input type="checkbox" id="l4"><i class="swatch green"></i><label for="l4">ski-jan-5-2023</label></li>
        <li><input type="checkbox" id="l5" checked><i class="swatch gold"></i><label for="l5">ski-jan-4-2023</label></li>
        <li><input type="checkbox" id="l6" checked><i class="swatch pink"></i><label for="l6">ski-jan-3-2023</label></li>
      </ul>
    </section>
    <div class="splitter"></div>

    <div class="canvas">
      <svg class="map" viewBox="348 171 714 847" preserveAspectRatio="xMinYMin slice" role="img" aria-label="Ski tracks">
        <!-- western loop -->
        <g transform="translate(350 540) scale(.33333)">
          <path class="t pink" d="M165 132L178 125 205 132 235 134 285 128 320 143 370 158 415 180 470 193 505 185 540 165 552 150 572 138 590 112 618 98 632 70 655 57 685 47 730 57 768 78 768 92 760 115 770 150 780 190 785 215 850 224 910 230 940 262 995 290M995 290L1000 325 1015 358 1028 385 1022 415 1030 445 1047 465 1050 490 1038 520 1034 560 1020 588 1016 640 1017 665 1008 700 992 718 988 735 960 768 920 783 830 795 800 803 775 835 760 880 745 910 730 922 650 930 605 933 560 918 440 912 400 902 370 878 320 855 270 840 240 822 218 793 226 750 208 700 192 652 160 610 140 582 118 540 95 490 75 435 48 400 40 370 55 350 100 330 130 318 150 280 175 235 180 205 205 150 180 148"/>
          <path class="t gold" d="M160 130L172 133 178 112 195 110 215 121 240 126 262 118 275 100 288 93 303 97 330 118 370 144 415 178M415 178L416 200 418 225 425 262 440 277 460 284 500 283 540 283 615 287 660 282 740 286 830 283 910 284 990 284M178 112L225 130 290 124 325 142 370 154 410 174 470 190 520 172 545 172 570 148 600 118 655 60 675 48 710 49 765 75 768 85 755 100 765 140 778 170 776 205 795 222 850 224 915 226 928 245 990 282 998 298M990 300L930 304 870 302 830 307 740 303 650 307 540 304 470 306 420 307 400 325 370 333 330 327 285 314 275 320 200 352 147 395 144 430 149 465 147 500 150 530 143 570 150 610 190 658 206 700 222 745 217 790 260 832 320 849 370 874 408 902 440 908 560 914 605 930 700 922 735 905 750 885 760 850 780 815 830 790 860 781 930 774 980 742 1005 712 1050 708"/>
          <path class="t violet" d="M165 132L180 114 240 130 285 126 330 147 415 180 480 190 540 172 560 165 600 120 655 65 685 49 730 57 760 75 752 100 765 140 780 165 782 192 815 205 870 213 905 222 925 248 990 285M205 148L200 170 185 210 150 285 130 318 65 340 36 365 38 385 65 430 90 510 143 595 150 630 190 670 200 708 215 740 216 795 240 827 270 850 310 863 380 890 415 914 550 923 600 934 650 930 735 918 760 860 785 816 900 810 930 807M143 540L144 565 146 590"/>
          <path class="t cyan" d="M168 132L180 112 220 126 285 129 330 148 415 180 465 195 490 194 540 172 560 150 580 128 595 103 655 65 685 50 715 52 755 70 773 82 758 100 765 145 778 170 775 210 795 226 905 232 950 272 998 293 1050 289M207 147L190 170 165 240 150 285 138 307M138 307L210 307 270 307 280 315 270 322 205 350 140 396 140 420 130 465 138 520 145 595 187 655 215 735 218 788 240 808 270 834 330 855 370 873 425 905 560 917 605 932 730 920 750 895 770 840 800 804 830 793 920 783 960 762 1005 713 1050 710"/>
          <path class="t rose" d="M165 125L172 138 205 135 240 134 285 126 330 146 380 158 415 178 470 190 500 187 540 173 570 194 600 203 622 184 670 191 700 207 728 227 800 228 905 227 940 265 995 293 1000 322 1050 338M165 148L180 150 207 145 205 165 160 265 135 305 132 318 100 330 50 350 37 370 40 390 65 427 90 512 115 540 143 595 160 625 190 655 205 700 221 745 217 793 240 820 270 838 320 852 370 875 405 903 440 909 560 916 605 930 730 920 745 908 760 870 775 830 800 803 830 793 920 787 960 768 990 735 1005 713 1050 710M160 128L185 136 168 150 178 122 180 148 165 140 208 146"/>
        </g>
        <!-- eastern loop -->
        <g transform="translate(670 410) scale(.33333)">
          <path class="t gold" d="M38 313L32 270 34 220 37 180 31 130 32 60 38 47 100 44 200 44 300 40 360 37 410 41 520 44 700 42 800 41 850 36 880 30 890 38 893 48 910 46 940 49 980 46 1088 46 1105 58 1110 75 1111 130 1115 160 1108 235 1114 300 1111 400 1112 470 1109 515 1116 560 1117 650 1090 695 1065 735 1057 763 1033 780 980 825 910 895 870 917 820 942 815 960 830 1000 845 1035 830 1090 808 1130 785 1140 680 1143 470 1128 430 1116 380 1106 300 1104 190 1095 100 1101 45 1104 0 1145M893 48L860 62 853 80 853 165 820 205 818 235 823 245 818 270 790 300 720 336 708 350 692 385 660 435 655 450 661 500 664 550 685 590 699 635 675 690 620 745 616 785 620 810 615 828 560 875 545 895 530 912 510 912 482 900 470 880 470 850 492 815 475 795 410 779 370 760 310 731 250 731 210 742 170 748 130 744 80 723 38 710M893 50L862 58 856 75 855 168 824 204 821 235 819 268 793 303 712 346 696 385 662 440M38 310L60 297 100 290 155 290 190 275 235 247 260 243 300 255 365 279 430 300 465 303 520 320 555 360 610 400 658 450M-2 660L20 672 38 680 30 690 0 692"/>
          <path class="t violet" d="M34 682L38 660 33 590 28 510 33 465 33 330 40 312 60 297 100 291 155 289 190 275 235 246 270 244 310 260 380 285 435 305 490 311 525 322 548 340 545 352 590 395 605 402 655 450 660 500 655 540 660 565 685 605 692 635 668 695 612 747 605 775 620 800 612 830 555 880 555 903 575 928 640 960 670 958 690 946 760 937 810 955 820 1000 840 1035 825 1090 800 1132 770 1143 680 1146 560 1140 480 1135 430 1128 380 1110 305 1110 280 1133 250 1146 200 1157 150 1172 70 1174 0 1190 -30 1197M38 1105L180 1099 300 1106"/>
          <path class="t cyan" d="M1116 440L1120 465 1115 470 1116 590 1118 655 1090 690 1062 735 1058 765 1033 780 970 835 910 898 870 918 820 942 815 960 825 1005 838 1040 830 1085 805 1130 770 1143 680 1145 470 1130 380 1106 300 1105 190 1099 100 1101 45 1104 0 1148M1114 470L1115 600 1116 650M38 682L90 679 140 686 210 689 250 685 310 678 360 677 400 682 460 677 620 677 700 668 810 657 850 649 890 649 960 657 1020 664 1065 667 1090 692 1090 680 1115 650M450 679L465 679"/>
          <path class="t rose" d="M38 713L80 724 130 742 170 748 210 743 250 736 305 737 330 747 370 764 410 779 472 795 476 845 484 847 484 893 520 910 552 900 575 925 650 957 690 946 760 937 808 945 825 970 843 1028 843 1045 830 1085 805 1125 780 1142 680 1141 560 1132 470 1130 380 1110 300 1106 190 1100 45 1106 0 1155"/>
        </g>
      </svg>
    </div>
  </main>
</div>
</body>
</html>
```
FILE: tracks.js
```js
// Soften the corners of the recorded tracks: each vertex is cut by a short
// curve, so the line still passes close to the recorded point.
document.querySelectorAll('.t').forEach(function (path) {
  var runs = path.getAttribute('d').split('M').filter(Boolean);
  path.setAttribute('d', runs.map(function (run) {
    var n = run.match(/-?\d+/g).map(Number);
    var last = n.length - 2;
    var d = 'M' + n[0] + ' ' + n[1];
    function toward(i, j) {
      return (n[i] + (n[j] - n[i]) * 0.3) + ' ' + (n[i + 1] + (n[j + 1] - n[i + 1]) * 0.3);
    }
    for (var i = 2; i < last; i += 2) {
      d += 'L' + toward(i, i - 2) + 'Q' + n[i] + ' ' + n[i + 1] + ' ' + toward(i, i + 2);
    }
    return d + 'L' + n[last] + ' ' + n[last + 1];
  }).join(''));
});
```
FILE: styles.css
```css
* { box-sizing: border-box; }

body {
  margin: 0;
  padding: 2px 3px 0 1px;
  height: 100vh;
  overflow: hidden;
  display: flex;
  background:
    linear-gradient(#1d3a66, #1d3a66) 100% 254px / 2px 8px no-repeat,
    linear-gradient(#3a1510, #3a1510) 100% 658px / 2px 17px no-repeat,
    #d6d6d6;
  color: #000;
  font: 12px/16px "Open Sans", "Noto Sans", sans-serif;
}

h1, h2 { margin: 0; font-size: 12px; font-weight: 400; }

button {
  margin: 0;
  padding: 0;
  border: 0;
  background: none;
  color: inherit;
  font: inherit;
}

.sprite { display: none; }
.paints { position: absolute; width: 0; height: 0; }

.window {
  flex: 1;
  min-width: 0;
  display: flex;
  flex-direction: column;
  border: 1px solid #6e6e6e;
  border-bottom: 0;
  background: #f0f0f0;
}

/* title and menu */
.titlebar { display: flex; align-items: center; height: 30px; padding-left: 8px; background: #fff; }
.titlebar h1 { flex: 1; margin-left: 5px; font-size: 11px; }
.logo { width: 16px; height: 16px; }
.win { width: 46px; height: 30px; }
.win svg { display: block; width: 12px; height: 12px; margin: auto; fill: none; stroke: #000; shape-rendering: crispEdges; }
.win .smooth { shape-rendering: auto; }

.menubar { display: flex; gap: 1px; height: 19px; padding-left: 3px; }
.menubar button { padding: 0 7px; font-size: 11px; }
.menubar u { text-underline-offset: 2px; }

/* toolbars */
.toolbar {
  display: flex;
  align-items: center;
  height: 39px;
  border-top: 1px solid #fff;
  border-bottom: 1px solid #b4b4b4;
  background: linear-gradient(#fafafa, #ededed);
}

.tool { position: relative; flex: none; width: 33px; height: 30px; }
.tool svg { display: block; width: 24px; height: 24px; margin: auto; }
.tool.pressed { border: 1px solid #a3a3a3; border-radius: 2px; background: #dadada; }
.tool.drop { width: 45px; padding-right: 12px; }

button:disabled svg { opacity: .3; filter: grayscale(.8); }

.drop::after, .menu::after {
  content: "";
  position: absolute;
  border: 4px solid transparent;
  border-top-color: #555;
  border-bottom: 0;
}
.drop::after { right: 2px; top: 13px; }
.menu::after { right: 2px; bottom: 0; border-width: 3px; border-bottom: 0; }
.drop:disabled::after, .menu:disabled::after { border-top-color: #999; }

.grip, .grip-h { flex: none; background: conic-gradient(from 0deg at 1px 1px, transparent 270deg, #b8b8b8 0) 0 0 / 3px 3px; }
.grip { width: 4px; height: 22px; margin: 0 5px 0 7px; }
.grip.first { margin: 0 2px 0 6px; }
.grip.last { margin: 0 8px 0 9px; }
.sep { flex: none; width: 1px; height: 20px; margin: 0 3px; background: #cfcfcf; }
.more { flex: none; width: 13px; font-size: 16px; line-height: 20px; text-align: right; color: #333; }
.more.end { margin-left: auto; }
.more.end:last-child { margin-right: 4px; }

/* work area */
.work { flex: 1; min-height: 0; display: flex; }

.sidebar {
  flex: none;
  width: 52px;
  padding: 5px 0 0 3px;
  display: flex;
  flex-direction: column;
  align-items: flex-start;
  border-right: 1px solid #b4b4b4;
  background: linear-gradient(90deg, #fafafa, #ededed);
}
.sidebar .tool { height: 32px; }
.sidebar .tool.wide { width: 45px; }
.grip-h { width: 16px; height: 4px; margin: 0 0 4px 16px; }

.layers { flex: none; width: 287px; display: flex; flex-direction: column; }
.panel-head { display: flex; align-items: center; gap: 2px; height: 22px; padding: 0 1px 0 4px; }
.panel-head h2 { flex: 1; font-size: 11px; }
.dock { width: 12px; height: 12px; }
.dock svg { display: block; width: 11px; height: 11px; fill: none; stroke: #555; }

.panel-tools { display: flex; align-items: center; height: 37px; padding: 0 0 3px 3px; }
.mini { position: relative; flex: none; width: 25px; height: 24px; }
.mini svg { display: block; width: 16px; height: 16px; margin: auto; }
.mini.menu { width: 33px; }
.mini.menu::after { right: 3px; bottom: 0; }
.mini.drop { width: 46px; padding-right: 12px; }
.mini.drop::after { top: 10px; right: 4px; }

.tree {
  flex: 1;
  margin: 0;
  padding: 0 0 0 24px;
  list-style: none;
  border: 1px solid #b4b4b4;
  border-bottom: 0;
  border-left: 0;
  background: #fff;
}
.tree li { display: flex; align-items: center; height: 18px; }
.tree input {
  appearance: none;
  width: 14px;
  height: 14px;
  margin: 0 6px 0 0;
  border: 1px solid #b9b9b9;
  background: #fff;
}
.tree input:checked {
  background: #fff url("data:image/svg+xml,%3Csvg xmlns='http://www.w3.org/2000/svg' viewBox='0 0 12 12'%3E%3Cpath d='M2.500 5.500L5 9.500 9.500 2' fill='none' stroke='%23000' stroke-width='1.800'/%3E%3C/svg%3E");
}
.tree label { flex: 1; height: 18px; margin-left: 3px; padding-left: 2px; font-weight: 700; border: 1px solid transparent; }
.current label { border-color: #b8dcf0; border-radius: 2px; background: linear-gradient(#f7fbff, #e9f4fd); text-decoration: underline; }
.off label { color: #808080; font-style: italic; }

.swatch { width: 14px; height: 2px; }
.swatch.rose { background: #ee8ca5; }
.swatch.cyan { background: #67ccd8; }
.swatch.violet { background: #b39ccd; }
.swatch.green { background: #a3c991; }
.swatch.gold { background: #dfc264; }
.swatch.pink { background: #f5b9c5; }

.splitter { flex: none; display: flex; align-items: center; justify-content: center; width: 6px; }
.splitter::before { content: ""; width: 2px; height: 18px; background: repeating-linear-gradient(#b8b8b8 0 1px, transparent 1px 3px); }

.canvas { flex: 1; min-width: 0; margin-top: 1px; border: 1px solid #b4b4b4; border-right: 0; border-bottom: 0; background: #fff; overflow: hidden; }
.map { display: block; width: 100%; height: 100%; }
.t { fill: none; stroke-width: 3; stroke-linejoin: round; }
.t.gold { stroke: #d6b645; }
.t.cyan { stroke: #4cc2d1; }
.t.violet { stroke: #9b82bd; }
.t.rose { stroke: #ea7896; }
.t.pink { stroke: #f4b0bd; }

/* lettering inside icons */
.glyph-i { font: italic 700 17px "Liberation Serif", serif; fill: #fff; }
.glyph-a { font: 700 11px "DejaVu Sans", sans-serif; fill: #444; }
.glyph-abc { font: 700 8px "DejaVu Sans", sans-serif; fill: #333; }
.glyph-q { font: 700 16px "Liberation Serif", serif; fill: #fff; }
.glyph-eps { font: 700 20px "Liberation Serif", serif; fill: #555; }
```
